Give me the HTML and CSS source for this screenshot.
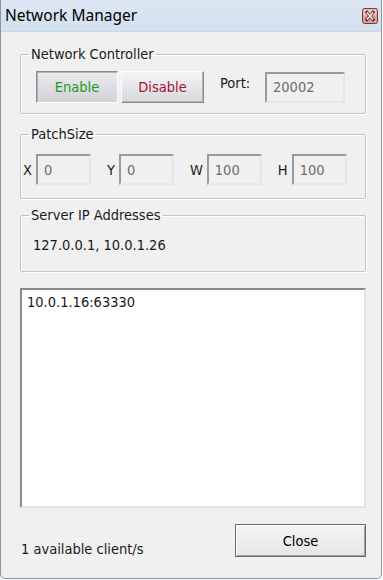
FILE: index.html
```html
<!DOCTYPE html>
<html lang="en">
<head>
  <meta charset="UTF-8">
  <meta name="viewport" content="width=device-width, initial-scale=1.0">
  <title>Network Manager</title>
  <link rel="stylesheet" href="styles.css">
</head>
<body>
  <div class="window">
    <div class="titlebar">
      <span class="title">Network Manager</span>
      <span class="close-x">
        <svg width="16" height="16" viewBox="0 0 16 16">
          <rect x="0.5" y="0.5" width="15" height="15" rx="2" fill="#d9a19b" stroke="#7a3a36"/>
          <rect x="1.5" y="1.5" width="13" height="6" rx="1" fill="#ecc7c2"/>
          <path d="M5 4.5 L11 11.5 M11 4.5 L5 11.5" stroke="#5a2a28" stroke-width="3.2" stroke-linecap="square"/>
          <path d="M5 4.5 L11 11.5 M11 4.5 L5 11.5" stroke="#fff" stroke-width="1.6"/>
        </svg>
      </span>
    </div>

    <div class="content">
      <fieldset class="group group-controller">
        <legend>Network Controller</legend>
        <div class="row">
          <button class="btn btn-pressed enable">Enable</button>
          <button class="btn disable">Disable</button>
          <label class="port-label">Port:</label>
          <input class="field port" type="text" value="20002" disabled>
        </div>
      </fieldset>

      <fieldset class="group group-patch">
        <legend>PatchSize</legend>
        <div class="row patch-row">
          <div class="pair"><label>X</label><input class="field small" type="text" value="0" disabled></div>
          <div class="pair"><label>Y</label><input class="field small" type="text" value="0" disabled></div>
          <div class="pair"><label>W</label><input class="field small" type="text" value="100" disabled></div>
          <div class="pair"><label>H</label><input class="field small" type="text" value="100" disabled></div>
        </div>
      </fieldset>

      <fieldset class="group group-server">
        <legend>Server IP Addresses</legend>
        <div class="server-ips">127.0.0.1, 10.0.1.26</div>
      </fieldset>

      <div class="client-list">
        <div class="client-item">10.0.1.16:63330</div>
      </div>

      <div class="footer">
        <span class="status">1 available client/s</span>
        <button class="btn close-btn">Close</button>
      </div>
    </div>
  </div>
</body>
</html>
```

FILE: styles.css
```css
body {
  margin: 0;
  padding: 0;
  background-color: #ffffff;
  font-family: 'DejaVu Sans Condensed', 'DejaVu Sans', sans-serif;
  font-size: 14.5px;
  color: #1a1a1a;
}
.window {
  width: 382px;
  height: 579px;
  box-sizing: border-box;
  border: 1px solid #8c96a1;
  border-top: none;
  border-radius: 0 0 5px 5px;
  background-color: #f0f0f0;
  display: flex;
  flex-direction: column;
  overflow: hidden;
}
.titlebar {
  height: 31px;
  flex: none;
  display: flex;
  align-items: center;
  justify-content: space-between;
  padding: 0 3px 0 4px;
  background: linear-gradient(#dde7f3, #d3e0ef);
  border-bottom: 1px solid #cbd6e3;
}
.title {
  font-family: 'Noto Sans', sans-serif;
  font-size: 15.5px;
  color: #000;
  margin-top: -1px;
}
.close-x {
  display: flex;
  margin-top: 1px;
}
.content {
  flex: 1;
  display: flex;
  flex-direction: column;
  padding: 14px 15px 0 19px;
}
.group {
  margin: 0;
  padding: 0;
  border: 1px solid #c4c4c4;
  box-shadow: inset 1px 1px 0 #fff, 1px 1px 0 #fff;
  border-radius: 2px;
}
.group legend {
  padding: 0 2px;
  margin-left: 8px;
  line-height: 16px;
}
.group-controller {
  padding: 9px 0 10px 0;
}
.group-controller .row {
  margin-left: 15px;
}
.group-patch {
  margin-top: 12px;
  padding: 12px 0 13px 0;
}
.group-patch .row {
  margin-left: 2px;
}
.group-server {
  margin-top: 8px;
  padding: 14px 0 18px 0;
}
.row {
  display: flex;
  align-items: center;
}
.btn {
  font-family: inherit;
  font-size: 14.5px;
  height: 32px;
  border: 1px solid;
  border-color: #fdfdfd #8a8a8a #8a8a8a #fdfdfd;
  box-shadow: inset -1px -1px 0 #b5b5b5;
  background: linear-gradient(#f6f6f8, #e4e4e8 55%, #d9d9de);
  padding: 0;
}
.btn-pressed {
  border-color: #8a8a8a #fdfdfd #fdfdfd #8a8a8a;
  box-shadow: inset 1px 1px 0 #b5b5b5;
  background: linear-gradient(#ebebef, #dcdce2 55%, #d2d2d8);
}
.enable {
  width: 82px;
  color: #1c9a22;
}
.disable {
  width: 83px;
  margin-left: 3px;
  color: #a81230;
}
.port-label {
  margin-left: 16px;
  margin-top: -8px;
  width: 45px;
}
.field {
  box-sizing: border-box;
  height: 31px;
  font-family: inherit;
  font-size: 14.5px;
  color: #6d6d6d;
  background-color: #f0f0f0;
  border: 2px solid;
  border-color: #9a9a9a #e6e6e6 #e6e6e6 #9a9a9a;
  padding: 0 0 0 6px;
  margin: 0;
}
.port {
  width: 80px;
}
.patch-row {
  gap: 16px;
}
.pair {
  display: flex;
  align-items: center;
  gap: 4px;
}
.small {
  width: 55px;
}
.server-ips {
  margin-left: 12px;
  line-height: 16px;
}
.client-list {
  margin-top: 16px;
  height: 220px;
  box-sizing: border-box;
  background-color: #ffffff;
  border: 2px solid;
  border-color: #8a8a8a #e3e3e3 #e3e3e3 #8a8a8a;
  padding: 4px 5px;
}
.client-item {
  line-height: 16px;
}
.footer {
  margin-top: 16px;
  display: flex;
  justify-content: space-between;
  align-items: flex-end;
}
.status {
  margin-left: 1px;
  line-height: 16px;
}
.close-btn {
  width: 131px;
  height: 33px;
  color: #000;
  border: 1px solid #6a6a6a;
  box-shadow: inset 1px 1px 0 #fff, inset -1px -1px 0 #a0a0a0;
  background: linear-gradient(#f4f4f4, #e6e6e6);
}
```
